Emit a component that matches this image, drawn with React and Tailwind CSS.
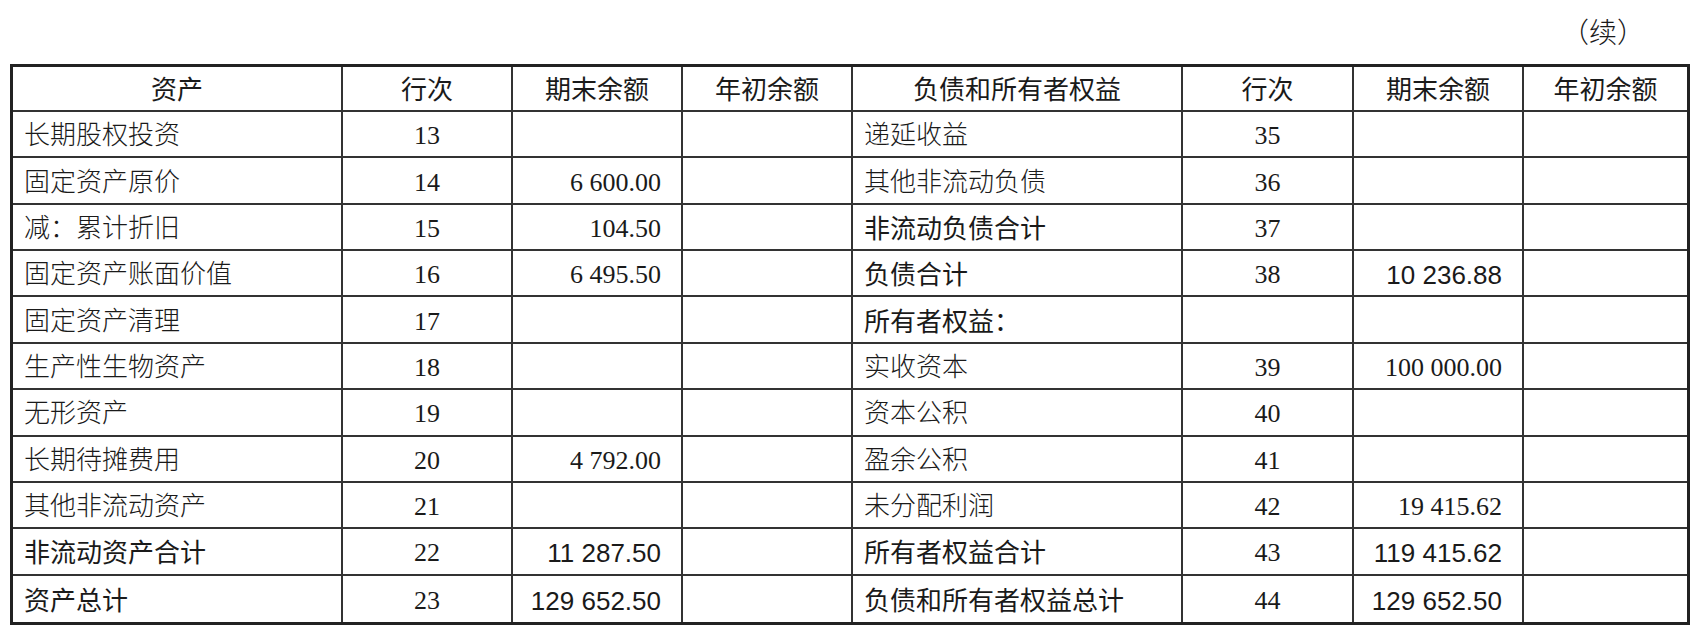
import React from 'react'

const left = [
  { name: '长期股权投资', no: '13', end: '' },
  { name: '固定资产原价', no: '14', end: '6 600.00' },
  { name: '减：累计折旧', no: '15', end: '104.50' },
  { name: '固定资产账面价值', no: '16', end: '6 495.50' },
  { name: '固定资产清理', no: '17', end: '' },
  { name: '生产性生物资产', no: '18', end: '' },
  { name: '无形资产', no: '19', end: '' },
  { name: '长期待摊费用', no: '20', end: '4 792.00' },
  { name: '其他非流动资产', no: '21', end: '' },
  { name: '非流动资产合计', no: '22', end: '11 287.50', bold: true },
  { name: '资产总计', no: '23', end: '129 652.50', bold: true },
]

const right = [
  { name: '递延收益', no: '35', end: '' },
  { name: '其他非流动负债', no: '36', end: '' },
  { name: '非流动负债合计', no: '37', end: '', bold: true },
  { name: '负债合计', no: '38', end: '10 236.88', bold: true },
  { name: '所有者权益：', no: '', end: '', bold: true },
  { name: '实收资本', no: '39', end: '100 000.00' },
  { name: '资本公积', no: '40', end: '' },
  { name: '盈余公积', no: '41', end: '' },
  { name: '未分配利润', no: '42', end: '19 415.62' },
  { name: '所有者权益合计', no: '43', end: '119 415.62', bold: true },
  { name: '负债和所有者权益总计', no: '44', end: '129 652.50', bold: true },
]

const serif = "font-['Liberation_Serif','Noto_Sans_CJK_SC',serif] font-light"
const sans = "font-['Liberation_Sans','Noto_Sans_CJK_SC',sans-serif]"

const Cell = ({ children, last, bottom, className = '' }) => (
  <div
    className={
      'flex items-center pt-[4px] border-[#333] ' +
      (last ? '' : 'border-r-2 ') +
      (bottom ? '' : 'border-b-2 ') +
      className
    }
  >
    {children}
  </div>
)

const Half = ({ row, bottom, lastHalf }) => (
  <>
    <Cell bottom={bottom} className={'pl-[11px] ' + (row.bold ? sans : serif)}>
      {row.name}
    </Cell>
    <Cell bottom={bottom} className={'justify-center ' + serif}>
      {row.no}
    </Cell>
    <Cell bottom={bottom} className={'justify-end pr-[20px] ' + (row.bold ? sans : serif)}>
      {row.end}
    </Cell>
    <Cell bottom={bottom} last={lastHalf} />
  </>
)

const heads = ['资产', '行次', '期末余额', '年初余额', '负债和所有者权益', '行次', '期末余额', '年初余额']

export default function App() {
  return (
    <div className="w-[1705px] h-[634px] bg-white text-[#1a1a1a] overflow-hidden">
      <div className="h-[64px] flex items-center justify-end pr-[60px] pt-[4px] text-[28px] font-['Liberation_Serif','Noto_Sans_CJK_SC',serif] font-light">
        （续）
      </div>
      <div className="ml-[10px] w-[1680px] border-[3px] border-[#222] grid grid-cols-[330px_170px_170px_170px_330px_171px_170px_163px] grid-rows-[45px_repeat(11,46.36px)] text-[26px] leading-none">
        {heads.map((h, i) => (
          <Cell key={i} last={i === 7} className={'justify-center !pt-[2px] ' + sans}>
            {h}
          </Cell>
        ))}
        {left.map((row, i) => (
          <React.Fragment key={i}>
            <Half row={row} bottom={i === left.length - 1} />
            <Half row={right[i]} bottom={i === left.length - 1} lastHalf />
          </React.Fragment>
        ))}
      </div>
    </div>
  )
}
